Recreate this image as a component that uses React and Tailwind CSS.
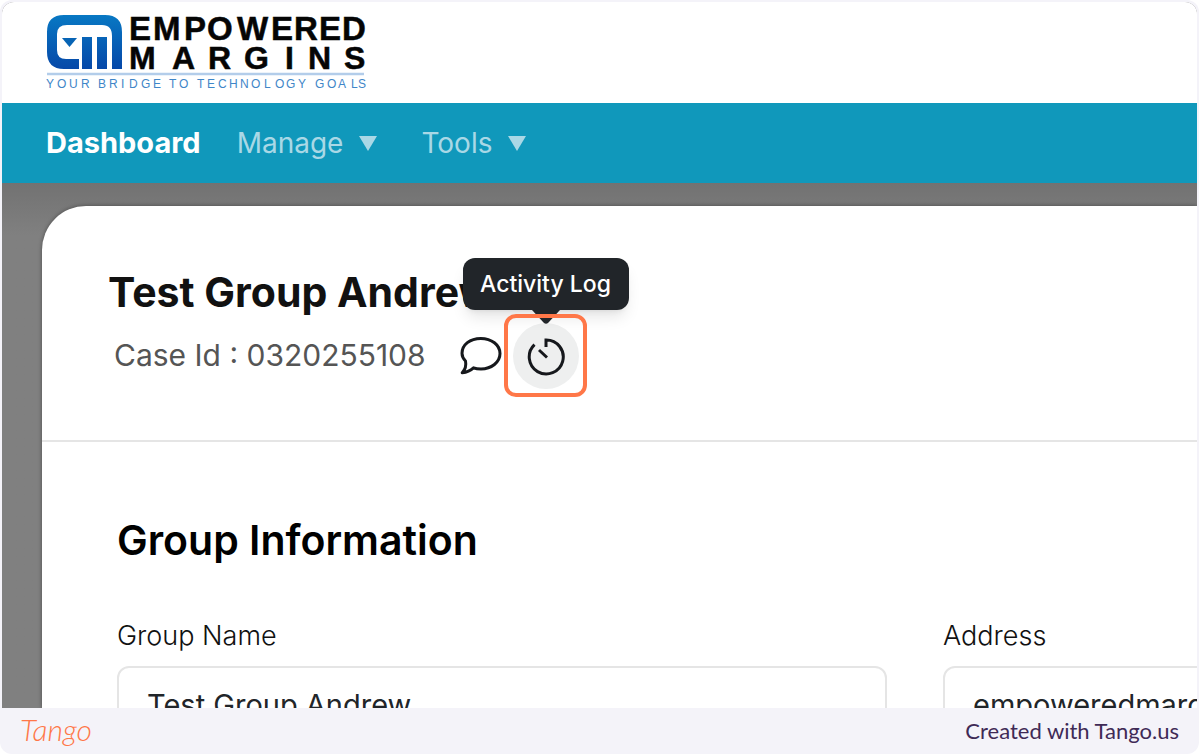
function BrandLogo() {
  return (
    <svg viewBox="0 0 324 78" className="h-[78px] w-[324px]" role="img" aria-label="Empowered Margins">
      <defs>
        <linearGradient id="mark" gradientUnits="userSpaceOnUse" x1="0" y1="0" x2="0" y2="55">
          <stop offset="0" stopColor="#0879c4" />
          <stop offset="1" stopColor="#0648a8" />
        </linearGradient>
      </defs>
      <path
        fill="url(#mark)"
        d="M18 1H59Q76 1 76 18V55H66V22Q66 11 56 11H21Q11 11 11 20V36Q11 45 20 45H33V55H18Q1 55 1 38V18Q1 1 18 1Z"
      />
      <path fill="url(#mark)" d="M36 23H46V55H36ZM51 23H61V55H51Z" />
      <path fill="#0764b5" d="M16 24H31L23.5 33Z" />
      <g fontFamily="Liberation Sans, sans-serif" fontWeight="700" fill="#050505" stroke="#050505" strokeWidth="0.5">
        <text y="26" fontSize="33" x="83 107 138 161 191 225 248 273 296">EMPOWERED</text>
        <text y="55" fontSize="32" x="83 126 162 198 239 262 298">MARGINS</text>
      </g>
      <path d="M1 60H318" stroke="#b3cdea" strokeWidth="2.5" />
      <text
        y="74"
        fontSize="12"
        fontFamily="Liberation Sans Narrow, Liberation Sans, sans-serif"
        fill="#3f86c8"
        x="0 11 23 35 44 52 63 75 83 95 107 115 123 133 143 151 161 172 183 194 205 218 229 240 252 260 269 281 292 305 312"
      >
        YOUR BRIDGE TO TECHNOLOGY GOALS
      </text>
    </svg>
  );
}

function Caret() {
  return (
    <svg viewBox="0 0 18 15" className="h-[15px] w-[18px]" fill="currentColor" aria-hidden="true">
      <path d="M0 0H18L9 15Z" />
    </svg>
  );
}

function ChatIcon() {
  return (
    <svg
      viewBox="0 0 42 40"
      className="h-10 w-[42px]"
      fill="none"
      stroke="currentColor"
      strokeWidth="3"
      strokeLinejoin="round"
      aria-hidden="true"
    >
      <path d="M5.5 25C3 22.5 2 20 2 17.3C2 8.8 10 2.4 20.8 2.4S40 9 40 17.6S31.5 33 21 33C18 33 15.5 32.6 13.5 31.8C10 35 6 36.3 2.2 36.8C5.3 33.5 6.3 29 5.5 25Z" />
    </svg>
  );
}

function TimerIcon() {
  return (
    <svg viewBox="0 0 40 40" className="size-10" fill="none" stroke="currentColor" strokeWidth="3" aria-hidden="true">
      <path d="M8.5 8.7A17 17 0 1 0 20 4V11" />
      <path d="M13 14L21 21.5" />
    </svg>
  );
}

function NavBar() {
  return (
    <nav className="flex h-20 shrink-0 items-center bg-[#1098bb] pl-11 text-[28px] text-[#a9d8e6]">
      <a href="#dashboard" className="text-[29px] font-bold text-white">Dashboard</a>
      <button type="button" className="ml-9 flex items-center gap-4">
        Manage <Caret />
      </button>
      <button type="button" className="ml-11 flex items-center gap-4">
        Tools <Caret />
      </button>
    </nav>
  );
}

function CaseHeader() {
  return (
    <header className="h-[236px] border-b-2 border-[#e5e5e5] pt-16 pl-[66px]">
      <h1 className="text-[41px] leading-[44px] font-bold whitespace-nowrap text-[#111]">Test Group Andrew</h1>
      <div className="flex items-center pl-1.5">
        <p className="w-[346px] text-[30px] whitespace-nowrap text-[#555]">Case Id : 0320255108</p>
        <button type="button" aria-label="Comments" className="text-[#16181c]">
          <ChatIcon />
        </button>
        <div className="relative ml-0.5 flex size-[83px] items-center justify-center">
          <button
            type="button"
            aria-label="Activity Log"
            className="flex size-[66px] items-center justify-center rounded-full bg-[#eeefef] text-[#16181c]"
          >
            <TimerIcon />
          </button>
          <div
            role="tooltip"
            className="absolute bottom-full left-1/2 mb-1 flex h-[52px] w-[166px] -translate-x-1/2 items-center justify-center rounded-xl bg-[#212529] text-[23px] font-medium whitespace-nowrap text-white shadow-lg"
          >
            Activity Log
            <svg viewBox="0 0 28 14" className="absolute top-full left-1/2 h-3.5 w-7 -translate-x-1/2" aria-hidden="true">
              <path d="M0 0H28L16 13Q14 14.5 12 13Z" fill="#212529" />
            </svg>
          </div>
          <div className="pointer-events-none absolute inset-0 rounded-xl border-4 border-[#ff7748]" />
        </div>
      </div>
    </header>
  );
}

function Field({ id, label, value }) {
  return (
    <div className="flex flex-col gap-3">
      <label htmlFor={id} className="text-[27px] leading-9 font-light text-[#111]">{label}</label>
      <input
        id={id}
        defaultValue={value}
        className="h-[76px] w-full rounded-xl border-2 border-[#e5e5e5] bg-white px-7 text-[29px] text-[#212529]"
      />
    </div>
  );
}

export default function App() {
  return (
    <div className="flex h-screen flex-col overflow-hidden rounded-xl bg-[#f4f3f9] px-0.5 pt-0.5 font-['Inter',sans-serif]">
      <div className="flex min-h-0 flex-1 flex-col overflow-hidden rounded-t-xl bg-[#808080]">
        <div className="h-[101px] shrink-0 bg-white pt-3 pl-11">
          <BrandLogo />
        </div>
        <NavBar />
        <main className="min-h-0 flex-1 overflow-hidden bg-linear-to-b from-[#727272] to-[#808080] to-10% pt-[23px] pl-10">
          <section className="h-full overflow-hidden rounded-tl-[44px] bg-white shadow-[0_0_4px_rgba(0,0,0,0.4)]">
            <CaseHeader />
            <div className="overflow-hidden pt-[72px] pl-[75px]">
              <h2 className="text-[41px] leading-[52px] font-semibold text-black">Group Information</h2>
              <form className="mt-[52px] grid grid-cols-[71.3%_71.3%] gap-14">
                <Field id="group-name" label="Group Name" value="Test Group Andrew" />
                <Field id="address" label="Address" value="empoweredmargins" />
              </form>
            </div>
          </section>
        </main>
      </div>
      <footer className="flex h-[46px] shrink-0 items-center justify-between pr-[18px] pl-[18px]">
        <a href="#tango" className="pb-1 font-['Lato',sans-serif] text-[30px] font-light text-[#ff7748] italic">Tango</a>
        <p className="pb-0.5 font-['Lato',sans-serif] text-[22px] text-[#3f2a56]">Created with Tango.us</p>
      </footer>
    </div>
  );
}
